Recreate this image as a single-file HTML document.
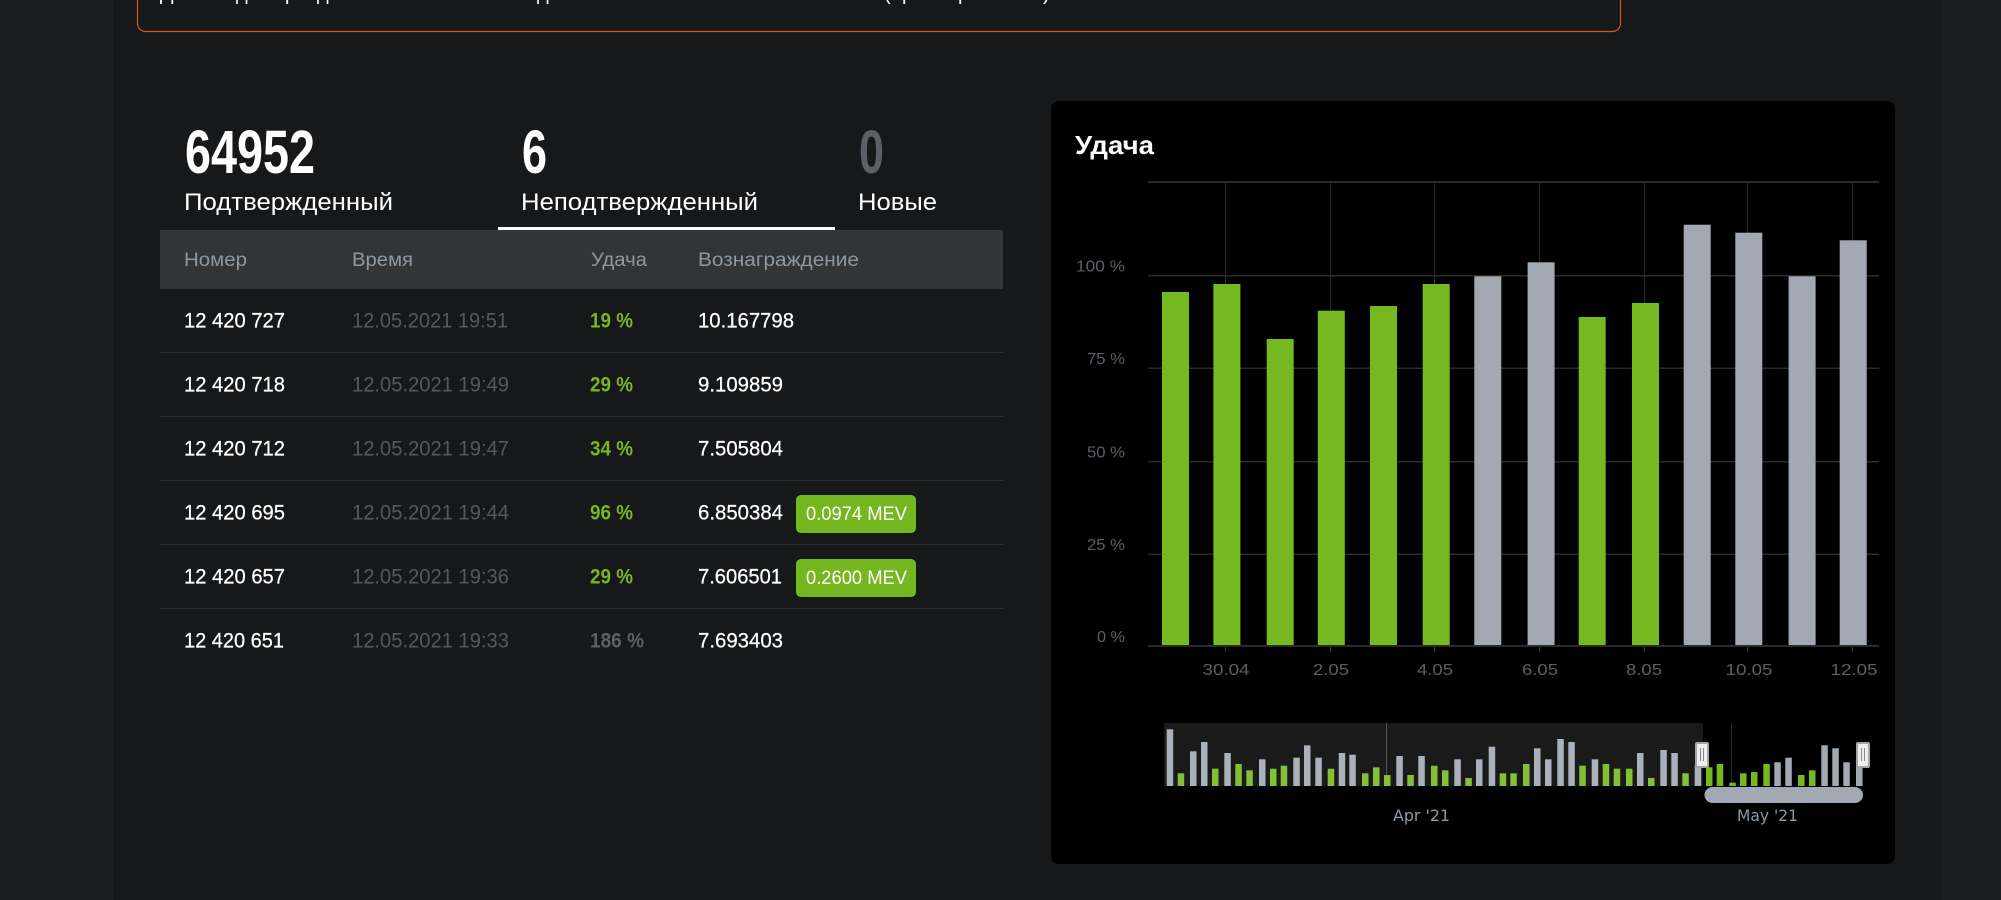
<!DOCTYPE html>
<html lang="ru">
<head>
<meta charset="utf-8">
<title>Блоки</title>
<style>
html,body{margin:0;padding:0;width:2001px;height:900px;overflow:hidden;background:#1c1d1f}
svg{display:block;position:absolute;left:0;top:0}
text{font-family:"Liberation Sans",sans-serif}
.w{fill:#fff;font-size:21px;stroke:#fff;stroke-width:.25px}
.t{fill:#55585e;font-size:21px}
.g{fill:#74b71f;font-size:21px;font-weight:700}
.m{fill:#5c5f66;font-size:21px;font-weight:700}
.h{fill:#8d98a5;font-size:19px}
.l{fill:#fff;font-size:24px}
.n{font-size:61px;font-weight:700;fill:#fff}
.b{fill:#fff;font-size:19px}
.a{font-family:"DejaVu Sans",sans-serif;font-size:16px;fill:#5c5f66}
.c{font-family:"DejaVu Sans",sans-serif;font-size:16px;fill:#8e99a5}
.gl{fill:#2a2a2a}
.vl{fill:#2c2c2c}
.gr{fill:#76b820}
.gy{fill:#a2a9b3}
</style>
</head>
<body>
<svg width="2001" height="900" viewBox="0 0 2001 900" xmlns="http://www.w3.org/2000/svg">
<rect x="113" y="0" width="1829" height="900" fill="#17181a"/>

<!-- alert -->
<rect x="137.5" y="-30" width="1483" height="61.5" rx="8" fill="none" stroke="#d3581a" stroke-width="1.2"/>
<g fill="#fff" font-size="20">
<text x="160" y="0">Д</text><text x="236" y="0">д</text><text x="285" y="0">р</text><text x="317" y="0">д</text><text x="537" y="0">д</text><text x="884" y="0">(</text><text x="902" y="0">р</text><text x="958" y="0">р</text><text x="1043" y="0">)</text>
</g>

<!-- stats -->
<text class="n" x="185" y="173" textLength="130" lengthAdjust="spacingAndGlyphs">64952</text>
<text class="n" x="522" y="173" textLength="25" lengthAdjust="spacingAndGlyphs">6</text>
<text class="n" x="859" y="173" textLength="25" lengthAdjust="spacingAndGlyphs" style="fill:#5c5f68">0</text>
<text class="l" x="184" y="210" textLength="209" lengthAdjust="spacingAndGlyphs">Подтвержденный</text>
<text class="l" x="521" y="210" textLength="237" lengthAdjust="spacingAndGlyphs">Неподтвержденный</text>
<text class="l" x="858" y="210" textLength="79" lengthAdjust="spacingAndGlyphs">Новые</text>
<rect x="498" y="227" width="337" height="3" fill="#fff"/>

<!-- table -->
<rect x="160" y="230" width="843" height="59" fill="#333437"/>
<text class="h" x="184" y="266" textLength="63" lengthAdjust="spacingAndGlyphs">Номер</text>
<text class="h" x="352" y="266" textLength="61" lengthAdjust="spacingAndGlyphs">Время</text>
<text class="h" x="591" y="266" textLength="56" lengthAdjust="spacingAndGlyphs">Удача</text>
<text class="h" x="698" y="266" textLength="161" lengthAdjust="spacingAndGlyphs">Вознаграждение</text>
<g fill="#2d2e30">
<rect x="160" y="352" width="843" height="1"/><rect x="160" y="416" width="843" height="1"/><rect x="160" y="480" width="843" height="1"/><rect x="160" y="544" width="843" height="1"/><rect x="160" y="608" width="843" height="1"/>
</g>

<text class="w" x="184" y="327.5" textLength="101" lengthAdjust="spacingAndGlyphs">12 420 727</text>
<text class="t" x="352" y="327.5" textLength="156" lengthAdjust="spacingAndGlyphs">12.05.2021 19:51</text>
<text class="g" x="590" y="327.5" textLength="43" lengthAdjust="spacingAndGlyphs">19 %</text>
<text class="w" x="698" y="327.5" textLength="96" lengthAdjust="spacingAndGlyphs">10.167798</text>

<text class="w" x="184" y="391.5" textLength="101" lengthAdjust="spacingAndGlyphs">12 420 718</text>
<text class="t" x="352" y="391.5" textLength="157" lengthAdjust="spacingAndGlyphs">12.05.2021 19:49</text>
<text class="g" x="590" y="391.5" textLength="43" lengthAdjust="spacingAndGlyphs">29 %</text>
<text class="w" x="698" y="391.5" textLength="85" lengthAdjust="spacingAndGlyphs">9.109859</text>

<text class="w" x="184" y="455.5" textLength="101" lengthAdjust="spacingAndGlyphs">12 420 712</text>
<text class="t" x="352" y="455.5" textLength="157" lengthAdjust="spacingAndGlyphs">12.05.2021 19:47</text>
<text class="g" x="590" y="455.5" textLength="43" lengthAdjust="spacingAndGlyphs">34 %</text>
<text class="w" x="698" y="455.5" textLength="85" lengthAdjust="spacingAndGlyphs">7.505804</text>

<text class="w" x="184" y="519.5" textLength="101" lengthAdjust="spacingAndGlyphs">12 420 695</text>
<text class="t" x="352" y="519.5" textLength="157" lengthAdjust="spacingAndGlyphs">12.05.2021 19:44</text>
<text class="g" x="590" y="519.5" textLength="43" lengthAdjust="spacingAndGlyphs">96 %</text>
<text class="w" x="698" y="519.5" textLength="85" lengthAdjust="spacingAndGlyphs">6.850384</text>
<rect x="796" y="495" width="120" height="38" rx="5" fill="#74b71f"/>
<text class="b" x="806" y="520" textLength="101" lengthAdjust="spacingAndGlyphs">0.0974 MEV</text>

<text class="w" x="184" y="583.5" textLength="101" lengthAdjust="spacingAndGlyphs">12 420 657</text>
<text class="t" x="352" y="583.5" textLength="157" lengthAdjust="spacingAndGlyphs">12.05.2021 19:36</text>
<text class="g" x="590" y="583.5" textLength="43" lengthAdjust="spacingAndGlyphs">29 %</text>
<text class="w" x="698" y="583.5" textLength="84" lengthAdjust="spacingAndGlyphs">7.606501</text>
<rect x="796" y="559" width="120" height="38" rx="5" fill="#74b71f"/>
<text class="b" x="806" y="584" textLength="101" lengthAdjust="spacingAndGlyphs">0.2600 MEV</text>

<text class="w" x="184" y="647.5" textLength="100" lengthAdjust="spacingAndGlyphs">12 420 651</text>
<text class="t" x="352" y="647.5" textLength="157" lengthAdjust="spacingAndGlyphs">12.05.2021 19:33</text>
<text class="m" x="590" y="647.5" textLength="54" lengthAdjust="spacingAndGlyphs">186 %</text>
<text class="w" x="698" y="647.5" textLength="85" lengthAdjust="spacingAndGlyphs">7.693403</text>

<!-- chart card -->
<rect x="1051" y="101" width="844" height="763" rx="8" fill="#000"/>
<text x="1075" y="154" font-size="26" font-weight="700" fill="#fff" textLength="79" lengthAdjust="spacingAndGlyphs">Удача</text>

<g class="vl">
<rect x="1225" y="182" width="1" height="470"/><rect x="1330" y="182" width="1" height="470"/><rect x="1434" y="182" width="1" height="470"/><rect x="1539" y="182" width="1" height="470"/><rect x="1644" y="182" width="1" height="470"/><rect x="1747" y="182" width="1" height="470"/><rect x="1852" y="182" width="1" height="470"/>
</g>
<g class="gl">
<rect x="1148" y="181" width="731" height="2"/><rect x="1148" y="275" width="731" height="1.5"/><rect x="1148" y="367.5" width="731" height="1.5"/><rect x="1148" y="461" width="731" height="1.5"/><rect x="1148" y="553.5" width="731" height="1.5"/><rect x="1148" y="645" width="731" height="2"/>
</g>

<g class="gr">
<rect x="1162" y="292" width="27" height="353"/>
<rect x="1213.4" y="284" width="27" height="361"/>
<rect x="1266.7" y="339" width="27" height="306"/>
<rect x="1317.8" y="310.7" width="27" height="334.3"/>
<rect x="1370" y="306" width="27" height="339"/>
<rect x="1422.7" y="284" width="27" height="361"/>
<rect x="1578.7" y="317" width="27" height="328"/>
<rect x="1632" y="303" width="27" height="342"/>
</g>
<g class="gy">
<rect x="1474.3" y="276.3" width="27" height="368.7"/>
<rect x="1527.6" y="262.3" width="27" height="382.7"/>
<rect x="1683.7" y="224.7" width="27" height="420.3"/>
<rect x="1735.3" y="232.7" width="27" height="412.3"/>
<rect x="1788.6" y="276.3" width="27" height="368.7"/>
<rect x="1839.7" y="240.3" width="27" height="404.7"/>
</g>

<g class="a" text-anchor="end">
<text x="1125" y="271.5" textLength="49" lengthAdjust="spacingAndGlyphs">100 %</text>
<text x="1125" y="364" textLength="38" lengthAdjust="spacingAndGlyphs">75 %</text>
<text x="1125" y="457.5" textLength="38" lengthAdjust="spacingAndGlyphs">50 %</text>
<text x="1125" y="550" textLength="38" lengthAdjust="spacingAndGlyphs">25 %</text>
<text x="1125" y="642" textLength="28" lengthAdjust="spacingAndGlyphs">0 %</text>
</g>
<g class="a" text-anchor="middle">
<text x="1226" y="675" textLength="47" lengthAdjust="spacingAndGlyphs">30.04</text>
<text x="1331" y="675" textLength="36" lengthAdjust="spacingAndGlyphs">2.05</text>
<text x="1435" y="675" textLength="36" lengthAdjust="spacingAndGlyphs">4.05</text>
<text x="1540" y="675" textLength="36" lengthAdjust="spacingAndGlyphs">6.05</text>
<text x="1644" y="675" textLength="36" lengthAdjust="spacingAndGlyphs">8.05</text>
<text x="1749" y="675" textLength="47" lengthAdjust="spacingAndGlyphs">10.05</text>
<text x="1854" y="675" textLength="47" lengthAdjust="spacingAndGlyphs">12.05</text>
</g>

<!-- navigator -->
<rect x="1386" y="723" width="1" height="63" fill="#444"/>
<rect x="1731" y="723" width="1" height="63" fill="#2a2a2a"/>
<g class="gy">
<rect x="1166.7" y="729.3" width="6.5" height="56.7"/><rect x="1190" y="751.3" width="6.5" height="34.7"/><rect x="1201" y="742" width="6.5" height="44"/><rect x="1224.3" y="753" width="6.5" height="33"/><rect x="1259" y="759.3" width="6.5" height="26.7"/><rect x="1293.3" y="757.7" width="6.5" height="28.3"/><rect x="1304" y="745.3" width="6.5" height="40.7"/><rect x="1315.3" y="757.7" width="6.5" height="28.3"/><rect x="1338.7" y="753" width="6.5" height="33"/><rect x="1349.3" y="754.7" width="6.5" height="31.3"/><rect x="1396.3" y="756" width="6.5" height="30"/><rect x="1418.3" y="756" width="6.5" height="30"/><rect x="1454.3" y="759.3" width="6.5" height="26.7"/><rect x="1476" y="759.3" width="6.5" height="26.7"/><rect x="1488.7" y="746.7" width="6.5" height="39.3"/><rect x="1534" y="748.3" width="6.5" height="37.7"/><rect x="1545" y="759.3" width="6.5" height="26.7"/><rect x="1557.3" y="739" width="6.5" height="47"/><rect x="1568.3" y="742" width="6.5" height="44"/><rect x="1591.7" y="759.3" width="6.5" height="26.7"/><rect x="1637" y="753" width="6.5" height="33"/><rect x="1660.3" y="750" width="6.5" height="36"/><rect x="1671.3" y="753" width="6.5" height="33"/><rect x="1694.7" y="765" width="6.5" height="21"/><rect x="1774.3" y="762.3" width="6.5" height="23.7"/><rect x="1785.3" y="757.7" width="6.5" height="28.3"/><rect x="1821.3" y="745.3" width="6.5" height="40.7"/><rect x="1832.3" y="748.3" width="6.5" height="37.7"/><rect x="1843.3" y="762.3" width="6.5" height="23.7"/><rect x="1856" y="764" width="6.5" height="22"/>
</g>
<g class="gr">
<rect x="1177.7" y="773.3" width="6.5" height="12.7"/><rect x="1212" y="768.7" width="6.5" height="17.3"/><rect x="1235.3" y="764" width="6.5" height="22"/><rect x="1246.3" y="770.3" width="6.5" height="15.7"/><rect x="1270" y="768.7" width="6.5" height="17.3"/><rect x="1280.7" y="765.7" width="6.5" height="20.3"/><rect x="1327.7" y="768.7" width="6.5" height="17.3"/><rect x="1362" y="773.3" width="6.5" height="12.7"/><rect x="1373" y="767.3" width="6.5" height="18.7"/><rect x="1384" y="775" width="6.5" height="11"/><rect x="1407.3" y="775" width="6.5" height="11"/><rect x="1431" y="765.7" width="6.5" height="20.3"/><rect x="1442" y="770.3" width="6.5" height="15.7"/><rect x="1465.3" y="778" width="6.5" height="8"/><rect x="1499.7" y="773.3" width="6.5" height="12.7"/><rect x="1510.3" y="773.3" width="6.5" height="12.7"/><rect x="1523" y="764" width="6.5" height="22"/><rect x="1579.3" y="765.7" width="6.5" height="20.3"/><rect x="1602.7" y="764" width="6.5" height="22"/><rect x="1613.7" y="768.7" width="6.5" height="17.3"/><rect x="1626" y="768.7" width="6.5" height="17.3"/><rect x="1648" y="778" width="6.5" height="8"/><rect x="1682.3" y="773.3" width="6.5" height="12.7"/><rect x="1706" y="767.3" width="6.5" height="18.7"/><rect x="1716.7" y="764" width="6.5" height="22"/><rect x="1729.3" y="782.7" width="6.5" height="3.3"/><rect x="1740" y="773.3" width="6.5" height="12.7"/><rect x="1751" y="772" width="6.5" height="14"/><rect x="1763.3" y="764" width="6.5" height="22"/><rect x="1798" y="775" width="6.5" height="11"/><rect x="1809" y="770.3" width="6.5" height="15.7"/>
</g>
<rect x="1164" y="723" width="539" height="63" fill="#fff" fill-opacity=".1"/>

<!-- handles -->
<g>
<rect x="1696" y="743" width="12" height="24" rx="1" fill="#eee" stroke="#a5a5a5" stroke-width="2"/>
<rect x="1700" y="748" width="1" height="13" fill="#888"/><rect x="1703" y="748" width="1" height="13" fill="#888"/>
<rect x="1857" y="743" width="12" height="24" rx="1" fill="#eee" stroke="#a5a5a5" stroke-width="2"/>
<rect x="1861" y="748" width="1" height="13" fill="#888"/><rect x="1864" y="748" width="1" height="13" fill="#888"/>
</g>
<rect x="1704.5" y="787" width="158.5" height="16" rx="8" fill="#a2a9b3"/>
<text class="c" x="1393" y="821" textLength="57" lengthAdjust="spacingAndGlyphs">Apr '21</text>
<text class="c" x="1737" y="821" textLength="61" lengthAdjust="spacingAndGlyphs">May '21</text>
</svg>
</body>
</html>
